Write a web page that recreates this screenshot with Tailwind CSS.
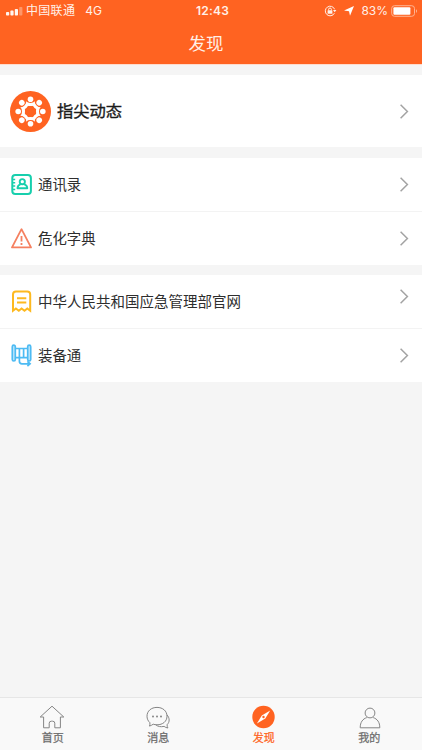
<!DOCTYPE html>
<html lang="zh-CN">
  <head>
    <meta charset="UTF-8" />
    <meta name="viewport" content="width=device-width, initial-scale=1.0" />
    <title>发现</title>
    <script src="https://cdn.jsdelivr.net/npm/@tailwindcss/browser@4"></script>
  </head>
  <body class="bg-[#f5f5f5] font-['Inter','Noto_Sans_CJK_SC',sans-serif] text-[#2e2e2e]">
    <div class="flex h-[750px] w-[422px] flex-col overflow-hidden">
      <!-- Header -->
      <header class="h-[65px] shrink-0 border-b border-[#ffdccd] bg-[#ff6321] text-[#fff0e8]">
        <div class="grid h-[22px] grid-cols-3 items-center px-[6px] text-[12px] leading-[22px]">
          <div class="flex items-center">
            <svg class="mr-[3px] h-[9px] w-[17px]" viewBox="0 0 17 9" fill="#fff5ef">
              <rect x="0" y="5" width="3.2" height="3.6" rx=".8" />
              <rect x="4.4" y="3.6" width="3.2" height="5" rx=".8" />
              <rect x="8.8" y="2" width="3.2" height="6.6" rx=".8" />
              <rect x="13.2" y="0" width="3.2" height="8.6" rx=".8" opacity=".35" />
            </svg>
            <span class="whitespace-nowrap tracking-[.3px]">中国联通</span>
            <span class="ml-[10px]">4G</span>
          </div>
          <div class="pl-[3px] text-center text-[12px] font-semibold tracking-[.2px]">12:43</div>
          <div class="flex items-center justify-end">
            <svg class="mr-[7px] h-[12px] w-[13px]" viewBox="0 0 13 12" fill="none" stroke="#fff0e8" stroke-width="1">
              <path d="M10.6 4.3A4.8 4.8 0 1 0 10.4 8.2" />
              <path d="M9 5h3.4l-1.7 2.2z" fill="#fff0e8" stroke="none" />
              <rect x="3.6" y="5.3" width="4.8" height="3.5" rx=".4" fill="#fff0e8" stroke="none" />
              <path d="M4.6 5.4V4.4a1.4 1.4 0 0 1 2.8 0v1" />
            </svg>
            <svg class="mr-[7px] h-[10px] w-[10px]" viewBox="0 0 10 10" fill="#fff">
              <path d="M10 0 6 9.8 5 5.2 0 4.4z" />
            </svg>
            <span>83%</span>
            <svg class="-mr-[2px] ml-[3px] h-[12px] w-[27px]" viewBox="0 0 27 12" fill="none">
              <rect x=".7" y=".7" width="22.8" height="10.6" rx="2.8" stroke="#ffb493" />
              <rect x="2.4" y="2.3" width="17" height="7.4" rx="1" fill="#fff" />
              <path d="M25 4.2c1.4.4 1.4 3.2 0 3.6z" fill="#ffb493" />
            </svg>
          </div>
        </div>
        <h1 class="h-[42px] pr-[10px] text-center text-[17.4px] leading-[44px]">发现</h1>
      </header>

      <!-- Menu -->
      <main class="flex-1 pt-[10px]">
        <section class="bg-white">
          <a class="flex h-[72px] items-center pr-[13px] pl-[10px]">
            <svg class="mr-[6px] size-[41px]" viewBox="-20.5 -20.5 41 41">
              <defs>
                <g id="person">
                  <circle cy="-12.3" r="2.8" />
                  <path d="M-4.6-9.9Q-2.8-8.5 0-8.5T4.6-9.9L3.2-6Q0-4.8-3.2-6z" />
                </g>
              </defs>
              <circle r="20.5" fill="#ff6321" />
              <circle r="7.2" fill="none" stroke="#fff" stroke-width="2" />
              <g fill="#fff">
                <use href="#person" />
                <use href="#person" transform="rotate(45)" />
                <use href="#person" transform="rotate(90)" />
                <use href="#person" transform="rotate(135)" />
                <use href="#person" transform="rotate(180)" />
                <use href="#person" transform="rotate(225)" />
                <use href="#person" transform="rotate(270)" />
                <use href="#person" transform="rotate(315)" />
              </g>
            </svg>
            <span class="flex-1 text-[16.3px] text-[#1c1c1c] [-webkit-text-stroke:0.35px_#1c1c1c]">指尖动态</span>
            <svg class="h-[15px] w-[9px]" viewBox="0 0 9 15" fill="none" stroke="#a3a3a3" stroke-width="1.5"><path d="m.6.8 6.8 6.7-6.8 6.7" /></svg>
          </a>
        </section>

        <section class="mt-[11px] bg-white">
          <a class="flex h-[54px] items-center border-b border-[#f3f3f3] pr-[13px] pl-[11px]">
            <svg class="mr-[6px] size-[21px]" viewBox="0 0 21 21" fill="none" stroke="#17cfad" stroke-width="2">
              <rect x="1.3" y="1" width="18.6" height="19" rx="3" />
              <path d="M1 5.5h3.2M1 8.8h3.2M1 12.1h3.2M1 15.4h3.2" stroke-width="1.5" />
              <circle cx="11.3" cy="7.7" r="2.6" stroke-width="1.9" />
              <path d="M9.6 10.1c-2.2.9-3.1 2.1-3.1 4.2h9.8c0-2.1-1-3.3-3.2-4.2" stroke-width="1.9" stroke-linejoin="round" />
            </svg>
            <span class="flex-1 text-[14.4px]">通讯录</span>
            <svg class="h-[15px] w-[9px]" viewBox="0 0 9 15" fill="none" stroke="#a3a3a3" stroke-width="1.5"><path d="m.6.8 6.8 6.7-6.8 6.7" /></svg>
          </a>
          <a class="flex h-[53px] items-center pr-[13px] pl-[11px]">
            <svg class="mr-[6px] size-[21px]" viewBox="0 0 21 21" fill="none" stroke="#f58060" stroke-width="1.8">
              <path d="M10.5 1.2 1 19.4h19z" stroke-linejoin="round" />
              <path d="M10.5 8v5.5M10.5 15v1.9" stroke-width="1.8" />
            </svg>
            <span class="flex-1 text-[14.4px]">危化字典</span>
            <svg class="h-[15px] w-[9px]" viewBox="0 0 9 15" fill="none" stroke="#a3a3a3" stroke-width="1.5"><path d="m.6.8 6.8 6.7-6.8 6.7" /></svg>
          </a>
        </section>

        <section class="mt-[10px] bg-white">
          <a class="flex h-[54px] items-center border-b border-[#f3f3f3] pr-[13px] pl-[11px]">
            <svg class="mr-[6px] h-[23px] w-[21px]" viewBox="0 0 21 23" fill="none" stroke="#fdb91f" stroke-width="2">
              <path d="M2 20.8V4.5Q2 1.4 5 1.4h11.2q3 0 3 3.1v16.3l-2.9-2.3-2.8 2.3-2.9-2.3-2.8 2.3-2.9-2.3z" />
              <path d="M6 8.2h9.3M6 12.4h9.3" />
            </svg>
            <span class="flex-1 text-[14.5px]">中华人民共和国应急管理部官网</span>
            <svg class="mb-[10px] h-[15px] w-[9px]" viewBox="0 0 9 15" fill="none" stroke="#a3a3a3" stroke-width="1.5"><path d="m.6.8 6.8 6.7-6.8 6.7" /></svg>
          </a>
          <a class="flex h-[53px] items-center pr-[13px] pl-[11px]">
            <svg class="mr-[6px] h-[23px] w-[21px]" viewBox="0 0 21 23" fill="none" stroke="#4dbbf3" stroke-width="1.7">
              <rect x="1.3" y="1.2" width="3" height="15.8" rx="1.5" fill="#c4e9fc" />
              <rect x="16.7" y="1.2" width="3" height="15.8" rx="1.5" fill="#c4e9fc" />
              <path d="M4.3 4.5h12.3M4.3 13.6h12.3M8.4 4.5v9.1M12.6 4.5v9.1" />
              <path d="M8.4 13.8v3.4q0 2.6 2.6 2.6h7.6M16.4 17.4l2.7 2.4-2.7 2.4" />
            </svg>
            <span class="flex-1 text-[14.4px]">装备通</span>
            <svg class="h-[15px] w-[9px]" viewBox="0 0 9 15" fill="none" stroke="#a3a3a3" stroke-width="1.5"><path d="m.6.8 6.8 6.7-6.8 6.7" /></svg>
          </a>
        </section>
      </main>

      <!-- Tab bar -->
      <nav class="grid h-[53px] shrink-0 grid-cols-4 border-t border-[#e6e6e6] bg-[#f9f9f9] text-[11px] leading-[14px] text-[#6d6d6d] [-webkit-text-stroke:0.25px_currentColor]">
        <a class="flex flex-col items-center pt-[7px]">
          <svg class="mr-[2px] mb-[2px] h-[24px] w-[26px]" viewBox="0 0 26 24" fill="none" stroke="#858585" stroke-width="1">
            <path d="M4.6 12H1.2L13 1.2 24.8 12h-3.4v10.8h-5.6v-4.6q0-2-2.2-2h-1.2q-2.2 0-2.2 2v4.6H4.6z" stroke-linejoin="round" />
          </svg>
          <span>首页</span>
        </a>
        <a class="flex flex-col items-center pt-[7px]">
          <svg class="mb-[2px] h-[24px] w-[24px]" viewBox="0 0 24 24" fill="none" stroke="#858585" stroke-width="1">
            <path d="M3.9 17.7C2.1 16.1 1 13.8 1 11.2 1 6 5.2 2.4 11 2.4S21 6 21 11.2 16.8 19.8 11 19.8c-1.4 0-2.7-.2-3.8-.6-1.1.8-2.4 1.5-3.7 1.9.4-1.1.5-2.2.4-3.4z" />
            <path d="M20.9 9.8c2.9 3.1 3 7.2.2 9.9 0 1.2.2 2.3.8 3.3-1.5-.2-2.7-.8-3.8-1.6-3.5.7-6.2.2-8.3-1.6" />
            <g fill="#858585" stroke="none">
              <circle cx="7" cy="11.4" r="1" />
              <circle cx="11" cy="11.4" r="1" />
              <circle cx="15" cy="11.4" r="1" />
            </g>
          </svg>
          <span>消息</span>
        </a>
        <a class="flex flex-col items-center pt-[7px] text-[#ff6321]">
          <svg class="mb-[2px] h-[24px] w-[23px]" viewBox="0 0 23 24">
            <circle cx="11.5" cy="12" r="11.2" fill="#ff6321" />
            <path d="M18.2 5.6 13.3 13.6 4.9 18.4 9.8 10.4z" fill="#fff" />
            <circle cx="11.5" cy="12" r="1.2" fill="#ff6321" />
          </svg>
          <span>发现</span>
        </a>
        <a class="flex flex-col items-center pt-[7px]">
          <svg class="mb-[2px] ml-[1px] h-[24px] w-[22px]" viewBox="0 0 22 24" fill="none" stroke="#858585" stroke-width="1">
            <circle cx="11" cy="8" r="4.9" />
            <path d="M7.8 12.6C3.7 13.9 1.2 17.2 1.2 22.8h19.6c0-5.6-2.5-8.9-6.6-10.2" />
          </svg>
          <span>我的</span>
        </a>
      </nav>
    </div>
  </body>
</html>
